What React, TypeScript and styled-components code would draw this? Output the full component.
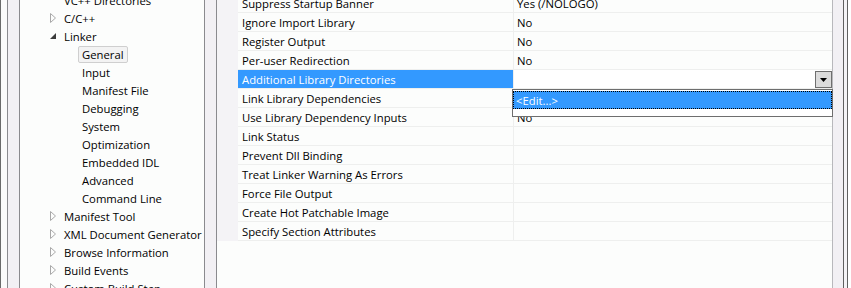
import React from "react";
import styled, { createGlobalStyle } from "styled-components";

const GlobalStyle = createGlobalStyle`
  html, body { margin: 0; padding: 0; background: #ffffff; }
  body { font-family: "Open Sans", "Noto Sans", sans-serif; font-size: 11.3px; color: #000; }
`;

const Page = styled.div`
  display: flex;
  width: 851px;
  height: 288px;
  overflow: hidden;
  background: #fcfdfc;
`;

const FrameEdge = styled.div`
  width: 6px;
  flex: none;
  border-left: 1px solid #6a6a6a;
  background: #fafafa;
`;

const Splitter = styled.div`
  width: 11px;
  flex: none;
  background: #f2f0f4;
  border-left: 1px solid #8a8a8e;
  border-right: 1px solid #8a8a8e;
`;

const Tree = styled.div`
  width: 184px;
  flex: none;
  overflow: hidden;
  background: #fcfdfc;
`;

const TreeList = styled.div`
  display: flex;
  flex-direction: column;
  margin-top: -9px;
`;

const TreeItem = styled.div<{ $level: number }>`
  height: 18px;
  display: flex;
  align-items: center;
  padding-left: ${(p) => (p.$level === 1 ? 30 : 58)}px;
  white-space: nowrap;
`;

const Expander = styled.span`
  width: 10px;
  flex: none;
  display: flex;
  align-items: center;
`;

const TreeLabel = styled.span<{ $selected?: boolean }>`
  line-height: 15px;
  padding: 0 3px;
  border: 1px solid ${(p) => (p.$selected ? "#cfcfcf" : "transparent")};
  border-radius: 2px;
  background: ${(p) => (p.$selected ? "#f3f3f3" : "transparent")};
`;

const Grid = styled.div`
  flex: 1;
  position: relative;
  display: flex;
  flex-direction: column;
`;

const Rows = styled.div`
  display: flex;
  flex-direction: column;
  margin-top: -6px;
  border-left: 21px solid #f4f3f6;
`;

const Row = styled.div`
  display: grid;
  grid-template-columns: 276px 1fr;
  height: 18px;
  border-bottom: 1px solid #eeefee;
`;

const NameCell = styled.div<{ $selected?: boolean }>`
  display: flex;
  align-items: center;
  padding-left: 4px;
  background: ${(p) => (p.$selected ? "#3399ff" : "transparent")};
  color: ${(p) => (p.$selected ? "#ffffff" : "#000000")};
  border-right: 1px solid #eeefee;
  white-space: nowrap;
`;

const ValueCell = styled.div<{ $editing?: boolean }>`
  display: flex;
  align-items: center;
  justify-content: space-between;
  padding-left: 3px;
  padding-right: 0;
  background: ${(p) => (p.$editing ? "#ffffff" : "transparent")};
  white-space: nowrap;
`;

const DropButton = styled.div`
  width: 15px;
  height: 15px;
  margin-top: 1px;
  border: 1px solid #6f6f6f;
  background: #dcdcdc;
  display: flex;
  align-items: center;
  justify-content: center;
`;

const DropList = styled.div`
  position: absolute;
  left: 295px;
  top: 89px;
  width: 319px;
  height: 26px;
  border: 1px solid #6e6e6e;
  background: #ffffff;
`;

const DropItem = styled.div`
  height: 18px;
  margin-top: 1px;
  display: flex;
  align-items: center;
  padding-left: 3px;
  background: #3399ff;
  color: #ffffff;
  outline: 1px dotted #000;
  outline-offset: -1px;
`;

const GridRightStrip = styled.div`
  width: 10px;
  flex: none;
  background: #f2f0f4;
  border-left: 1px solid #b8b8bc;
`;

const RightEdge = styled.div`
  width: 3px;
  flex: none;
  border-left: 1px solid #606060;
  border-right: 1px solid #606060;
  background: #f4f3f6;
`;

const RightSpace = styled.div`
  width: 3px;
  flex: none;
  background: #ffffff;
`;

const Collapsed = () => (
  <svg width="6" height="10" viewBox="0 0 6 10">
    <path d="M0.5 0.5 L5.5 5 L0.5 9.5 Z" fill="none" stroke="#a8a8a8" />
  </svg>
);

const Expanded = () => (
  <svg width="6" height="6" viewBox="0 0 6 6">
    <path d="M6 0 L6 6 L0 6 Z" fill="#3c3c3c" />
  </svg>
);

type Node = { label: string; level: number; exp?: "c" | "e"; selected?: boolean };

const tree: Node[] = [
  { label: "VC++ Directories", level: 1 },
  { label: "C/C++", level: 1, exp: "c" },
  { label: "Linker", level: 1, exp: "e" },
  { label: "General", level: 2, selected: true },
  { label: "Input", level: 2 },
  { label: "Manifest File", level: 2 },
  { label: "Debugging", level: 2 },
  { label: "System", level: 2 },
  { label: "Optimization", level: 2 },
  { label: "Embedded IDL", level: 2 },
  { label: "Advanced", level: 2 },
  { label: "Command Line", level: 2 },
  { label: "Manifest Tool", level: 1, exp: "c" },
  { label: "XML Document Generator", level: 1, exp: "c" },
  { label: "Browse Information", level: 1, exp: "c" },
  { label: "Build Events", level: 1, exp: "c" },
  { label: "Custom Build Step", level: 1, exp: "c" },
];

const props: [string, string][] = [
  ["Suppress Startup Banner", "Yes (/NOLOGO)"],
  ["Ignore Import Library", "No"],
  ["Register Output", "No"],
  ["Per-user Redirection", "No"],
  ["Additional Library Directories", ""],
  ["Link Library Dependencies", "Yes"],
  ["Use Library Dependency Inputs", "No"],
  ["Link Status", ""],
  ["Prevent Dll Binding", ""],
  ["Treat Linker Warning As Errors", ""],
  ["Force File Output", ""],
  ["Create Hot Patchable Image", ""],
  ["Specify Section Attributes", ""],
];

export default function App() {
  return (
    <>
      <GlobalStyle />
      <Page>
        <FrameEdge />
        <Splitter />
        <Tree>
          <TreeList>
            {tree.map((n) => (
              <TreeItem key={n.label} $level={n.level}>
                {n.level === 1 && (
                  <Expander>
                    {n.exp === "c" && <Collapsed />}
                    {n.exp === "e" && <Expanded />}
                  </Expander>
                )}
                <TreeLabel $selected={n.selected}>{n.label}</TreeLabel>
              </TreeItem>
            ))}
          </TreeList>
        </Tree>
        <Splitter />
        <Grid>
          <Rows>
            {props.map(([name, value], i) => {
              const sel = i === 4;
              return (
                <Row key={name}>
                  <NameCell $selected={sel}>{name}</NameCell>
                  <ValueCell $editing={sel}>
                    <span>{value}</span>
                    {sel && (
                      <DropButton>
                        <svg width="7" height="4" viewBox="0 0 7 4">
                          <path d="M0 0 L7 0 L3.5 4 Z" fill="#000" />
                        </svg>
                      </DropButton>
                    )}
                  </ValueCell>
                </Row>
              );
            })}
          </Rows>
          <DropList>
            <DropItem>&lt;Edit...&gt;</DropItem>
          </DropList>
        </Grid>
        <GridRightStrip />
        <RightEdge />
        <RightSpace />
      </Page>
    </>
  );
}
